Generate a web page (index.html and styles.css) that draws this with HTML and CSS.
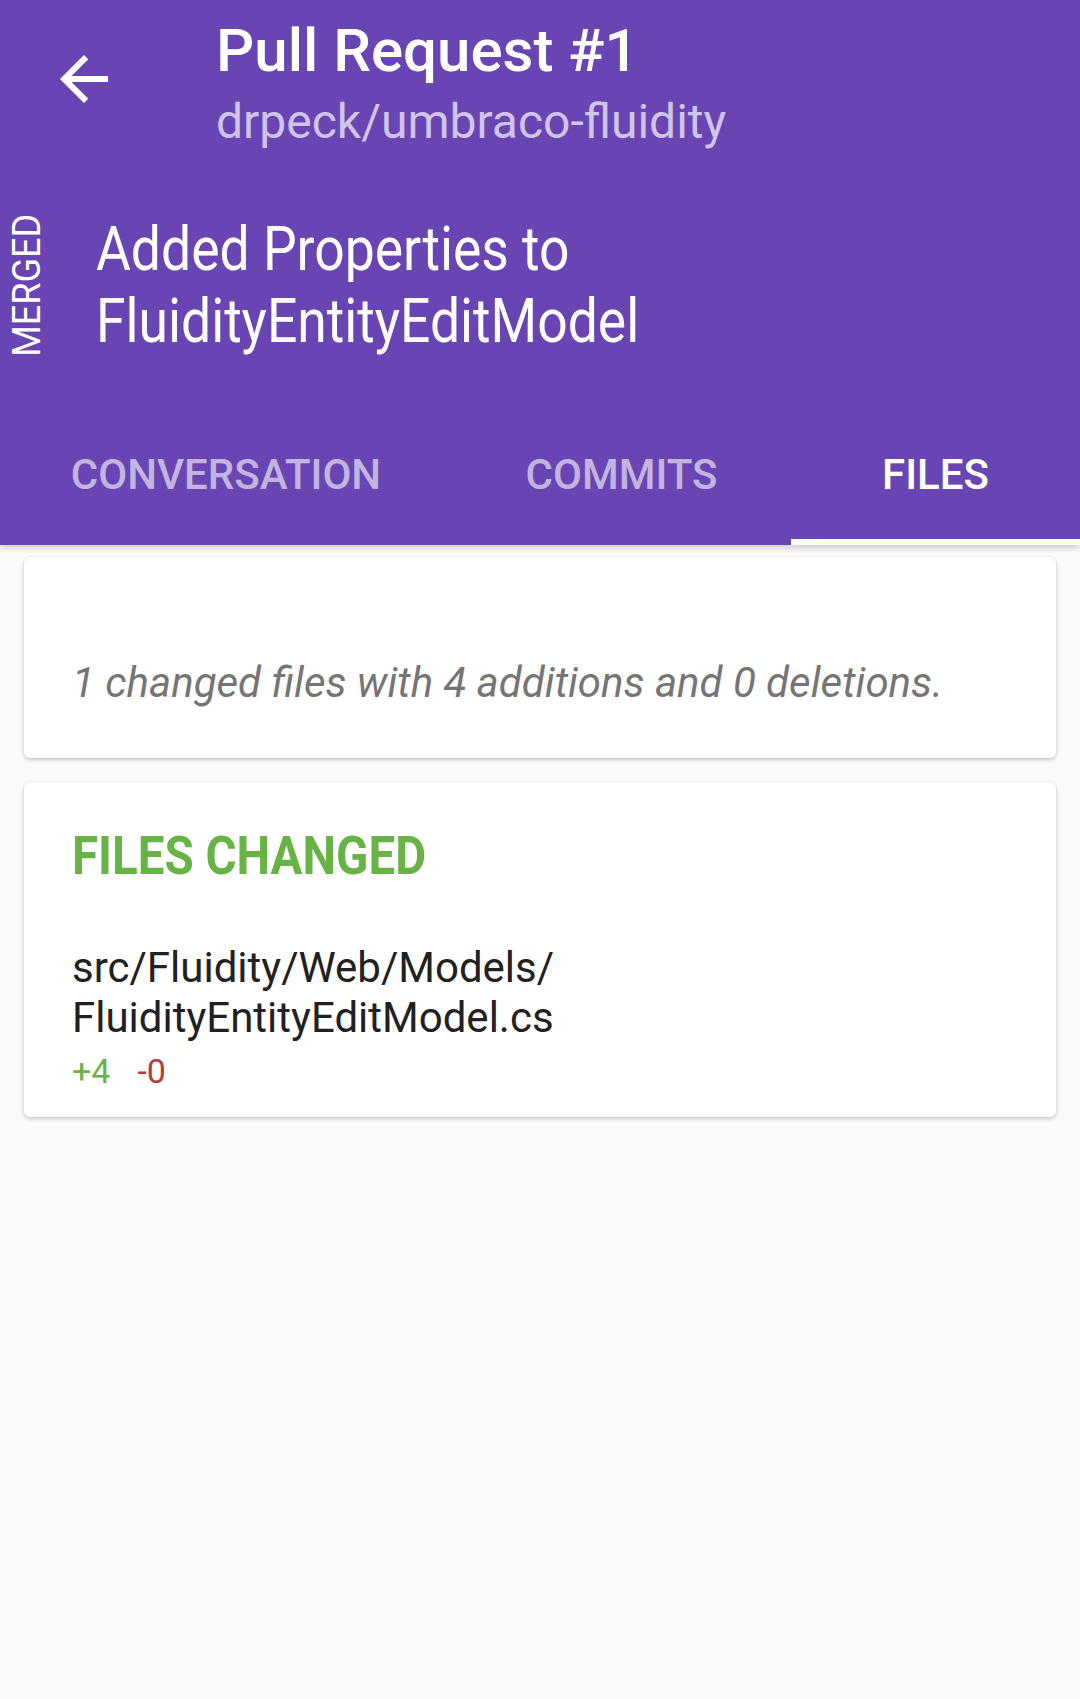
FILE: index.html
```html
<!DOCTYPE html>
<html lang="en">
<head>
<meta charset="utf-8">
<title>Pull Request #1</title>
<link rel="stylesheet" href="styles.css">
</head>
<body>
<header class="appbar">
  <div class="toolbar">
    <button class="nav-btn" aria-label="Back">
      <svg class="nav-icon" viewBox="0 0 24 24" width="72" height="72"><path d="M20 11H7.83l5.59-5.59L12 4l-8 8 8 8 1.41-1.41L7.83 13H20v-2z" fill="#ffffff"/></svg>
    </button>
    <div class="titles">
      <div class="title">Pull Request #1</div>
      <div class="subtitle">drpeck/umbraco-fluidity</div>
    </div>
  </div>
  <div class="pr">
    <div class="state-col"><span class="state">MERGED</span></div>
    <h1 class="pr-title"><span class="cond">Added Properties to</span><span class="cond">FluidityEntityEditModel</span></h1>
  </div>
  <nav class="tabs">
    <div class="tab tab-conv">CONVERSATION</div>
    <div class="tab tab-commits">COMMITS</div>
    <div class="tab tab-files active">FILES</div>
  </nav>
</header>
<main class="content">
  <section class="card summary-card">
    <div class="spacer"></div>
    <p class="summary">1 changed files with 4 additions and 0 deletions.</p>
  </section>
  <section class="card files-card">
    <h2 class="files-heading"><span class="cond">FILES CHANGED</span></h2>
    <div class="file">
      <div class="file-path">src/Fluidity/Web/Models/<br>FluidityEntityEditModel.cs</div>
      <div class="file-stats"><span class="add">+4</span><span class="del">-0</span></div>
    </div>
  </section>
</main>
</body>
</html>
```
FILE: styles.css
```css
* { box-sizing: border-box; }
html, body { margin: 0; padding: 0; }
body {
  background: #fafafa;
  font-family: Roboto, "Noto Sans", "Liberation Sans", sans-serif;
  width: 1080px;
  min-height: 1699px;
}
.appbar {
  background: #6945b3;
  color: #ffffff;
  box-shadow: 0 3px 6px rgba(0,0,0,0.18);
  position: relative;
  z-index: 1;
}
.toolbar {
  display: flex;
  padding-top: 16px;
}
.nav-btn {
  width: 168px;
  height: 72px;
  margin-top: 27px;
  padding: 0;
  border: 0;
  background: none;
  display: flex;
  justify-content: center;
  align-items: center;
  flex: none;
}
.nav-icon { display: block; }
.titles { padding-left: 48px; }
.title {
  font-size: 60px;
  font-weight: 500;
  line-height: 70px;
}
.subtitle {
  margin-top: 8px;
  font-size: 48px;
  line-height: 56px;
  color: #d1c4e9;
}
.pr {
  display: flex;
  align-items: center;
  margin-top: 63px;
}
.state-col {
  width: 96px;
  height: 144px;
  flex: none;
  display: flex;
  justify-content: center;
  align-items: center;
  padding-right: 42px;
}
.state {
  flex: none;
  writing-mode: vertical-rl;
  transform: rotate(180deg) scaleY(0.95);
  font-size: 38px;
  line-height: 40px;
  color: #ffffff;
}
.pr-title {
  margin: 0;
  font-size: 62px;
  font-weight: 400;
  line-height: 72px;
}
.cond {
  display: block;
  transform: scaleX(0.862);
  transform-origin: left center;
  white-space: nowrap;
}
.tabs {
  display: grid;
  grid-template-columns: 452px 339px 1fr;
  margin-top: 43px;
  height: 145px;
}
.tab {
  display: flex;
  align-items: center;
  justify-content: center;
  font-size: 42px;
  font-weight: 500;
  color: rgba(255,255,255,0.62);
  border-bottom: 6px solid transparent;
  padding-top: 10px;
}
.tab.active {
  color: #ffffff;
  border-bottom-color: #ffffff;
}
.content {
  padding: 12px 24px;
  display: flex;
  flex-direction: column;
  gap: 24px;
}
.card {
  background: #ffffff;
  border-radius: 6px;
  box-shadow: 0 2px 4px rgba(0,0,0,0.2), 0 0 2px rgba(0,0,0,0.08);
}
.summary-card { padding: 48px 48px 51px; }
.spacer { height: 53px; }
.summary {
  margin: 0;
  font-size: 42px;
  line-height: 49px;
  font-style: italic;
  color: #757575;
}
.files-card { padding: 42px 48px 26px; }
.files-heading {
  margin: 0;
  font-size: 54px;
  line-height: 63px;
  font-weight: 700;
  color: #67b346;
}
.files-heading .cond { transform: scaleX(0.88); }
.file { margin-top: 56px; }
.file-path {
  font-size: 42px;
  line-height: 50px;
  color: #212121;
}
.file-stats {
  margin-top: 8px;
  font-size: 34px;
  line-height: 40px;
  display: flex;
  gap: 27px;
}
.add { color: #67b346; }
.del { color: #b33b3b; }
```
